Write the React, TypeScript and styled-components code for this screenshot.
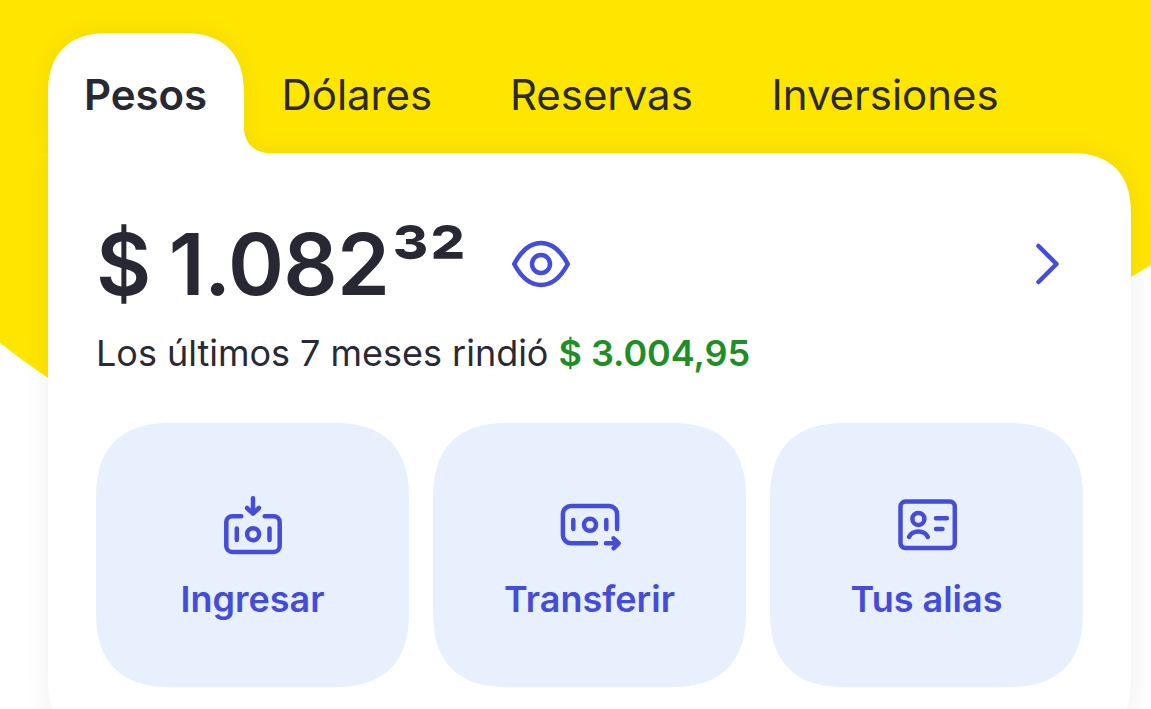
import styled, { createGlobalStyle } from 'styled-components';

const GlobalStyle = createGlobalStyle`
    body {
        margin: 0;
        background: #fff;
        overflow: hidden;
        font-family: Inter, "Liberation Sans", sans-serif;
    }
`;

const Page = styled.main`
    position: relative;
    height: 709px;
    overflow: hidden;
    box-sizing: border-box;
    padding: 33px 20px 0 48px;
`;

const Backdrop = styled.div`
    position: absolute;
    inset: 0;
    background: #ffe600;
    clip-path: path("M0 0H1151V265L1131 277Q600 640 48 378Q24 362 0 343Z");
`;

const Account = styled.section`
    position: relative;
`;

const Tabs = styled.nav`
    position: relative;
    z-index: 1;
    display: flex;
    height: 120px;
`;

const Tab = styled.button<{ $active?: boolean; $width: number }>`
    position: relative;
    flex: none;
    width: ${p => p.$width}px;
    height: 120px;
    padding: 0 0 0 ${p => p.$active ? 36 : 37.5}px;
    border: none;
    border-radius: 62px 62px 0 0;
    corner-shape: superellipse(1.3);
    background: ${p => p.$active ? '#fff' : 'none'};
    box-shadow: ${p => p.$active ? '0 0 26px rgba(40, 40, 90, 0.07)' : 'none'};
    clip-path: inset(-40px -40px 0 -40px);
    color: ${p => p.$active ? '#282834' : '#2b2a26'};
    font-family: inherit;
    font-size: 42px;
    font-weight: ${p => p.$active ? 600 : 400};
    line-height: 124px;
    letter-spacing: -0.05px;
    text-align: left;
    white-space: nowrap;

    &::after {
        content: "";
        display: ${p => p.$active ? 'block' : 'none'};
        position: absolute;
        left: 100%;
        bottom: 0;
        width: 24px;
        height: 24px;
        background: radial-gradient(circle at 100% 0, transparent 23.5px, #fff 24.2px);
    }
`;

const Card = styled.div`
    box-sizing: border-box;
    height: 588px;
    padding: 60px 48px 0;
    border-radius: 0 62px 62px 62px;
    corner-shape: superellipse(1.3);
    background: #fff;
    box-shadow: 0 0 26px rgba(40, 40, 90, 0.08);
`;

const BalanceRow = styled.div`
    display: flex;
    align-items: center;
    height: 102px;
    padding-right: 20px;
`;

const Balance = styled.div`
    width: 415px;
    padding-top: 1px;
    color: #282834;
    font-size: 85px;
    font-weight: 600;
    line-height: 104px;
    letter-spacing: -0.7px;
    word-spacing: -2.6px;
    white-space: nowrap;
`;

const Cents = styled.span`
    margin-left: 2px;
    font-size: 83px;
    line-height: 1;
`;

const IconButton = styled.button<{ $end?: boolean }>`
    display: flex;
    margin: 0 0 0 ${p => p.$end ? 'auto' : 0};
    padding: 0;
    border: none;
    background: none;
    color: #444cd8;
`;

const Earnings = styled.p`
    margin: 16px 0 0;
    height: 44px;
    color: #2a2a36;
    font-size: 36px;
    line-height: 44px;
    letter-spacing: -0.02px;
    white-space: nowrap;
`;

const Gain = styled.strong`
    color: #1e8e26;
    font-weight: 600;
    letter-spacing: -0.05px;
`;

const Actions = styled.div`
    display: grid;
    grid-template-columns: repeat(3, 1fr);
    gap: 24px;
    margin-top: 48px;
`;

const Action = styled.button`
    display: flex;
    flex-direction: column;
    align-items: center;
    height: 264px;
    padding: 68px 0 0;
    border: none;
    border-radius: 78px;
    corner-shape: superellipse(1.35);
    background: #e8f0fe;
    color: #444cd8;
    font-family: inherit;
    font-size: 36px;
    font-weight: 600;
    line-height: 44px;
    letter-spacing: 0;
`;

const Icon = styled.svg`
    display: block;
    flex: none;
    fill: none;
    stroke: currentColor;
    stroke-width: 4.5;
    stroke-linecap: round;
    stroke-linejoin: round;
`;

const ActionIcon = styled(Icon)`
    margin-bottom: 14px;
`;

const EyeIcon = () => (
    <Icon width="60" height="60" viewBox="0 0 60 60">
        <path d="M3.200 30C8 21 17 9 30 9s22 12 26.800 21C52 39 43 51 30 51S8 39 3.200 30Z" />
        <circle cx="30" cy="30" r="9" />
    </Icon>
);

const ChevronIcon = () => (
    <Icon width="30" height="48" viewBox="0 0 30 48">
        <path d="M5.500 6l18 18-18 18" />
    </Icon>
);

const DepositIcon = () => (
    <ActionIcon width="72" height="72" viewBox="0.2 -0.2 72 72">
        <path d="M24.500 25h-9a6 6 0 0 0-6 6v23.800a6 6 0 0 0 6 6h41.400a6 6 0 0 0 6-6V31a6 6 0 0 0-6-6h-9" />
        <path d="M36.200 7v15M30.200 16.800l6 5.700 6-5.700" />
        <path d="M20 37.200v11.600M52.700 37.200v11.600" />
        <circle cx="36.300" cy="43" r="6" />
    </ActionIcon>
);

const TransferIcon = () => (
    <ActionIcon width="72" height="72" viewBox="0.5 -0.1 72 72">
        <path d="M42.600 52.200H17.400a8 8 0 0 1-8-8V23a8 8 0 0 1 8-8h38.200a8 8 0 0 1 8 8v15" />
        <path d="M52.400 52.200h12M60 47.200l5.200 5-5.200 5" />
        <path d="M19.800 29v9M52.800 29v9" />
        <circle cx="36.500" cy="33.700" r="6" />
    </ActionIcon>
);

const AliasIcon = () => (
    <ActionIcon width="72" height="72" viewBox="0.4 -0.2 72 72">
        <rect x="9.900" y="10.400" width="54.300" height="46.400" rx="5" />
        <circle cx="27.800" cy="27.700" r="6" />
        <path d="M18.400 45.800c1.800-3.800 5-5.500 9.400-5.500s7.600 1.700 9.400 5.500" />
        <path d="M45.400 27.100h10.900M45.400 37.800h6.500" />
    </ActionIcon>
);

const tabs = [
    { label: 'Pesos', width: 196, active: true },
    { label: 'Dólares', width: 228.5 },
    { label: 'Reservas', width: 261.5 },
    { label: 'Inversiones', width: 300 },
];

const actions = [
    { label: 'Ingresar', icon: DepositIcon },
    { label: 'Transferir', icon: TransferIcon },
    { label: 'Tus alias', icon: AliasIcon },
];

export default function App() {
    return <Page>
        <GlobalStyle />
        <Backdrop />
        <Account>
            <Tabs>
                {tabs.map(tab => <Tab
                    key={tab.label}
                    $active={tab.active}
                    $width={tab.width}
                >
                    {tab.label}
                </Tab>)}
            </Tabs>
            <Card>
                <BalanceRow>
                    <Balance>$ 1.082<Cents>³²</Cents></Balance>
                    <IconButton aria-label="Ocultar saldo"><EyeIcon /></IconButton>
                    <IconButton aria-label="Ver detalle" $end><ChevronIcon /></IconButton>
                </BalanceRow>
                <Earnings>
                    Los últimos 7 meses rindió <Gain>$ 3.004,95</Gain>
                </Earnings>
                <Actions>
                    {actions.map(({ label, icon: ActionGlyph }) => <Action key={label}>
                        <ActionGlyph />
                        {label}
                    </Action>)}
                </Actions>
            </Card>
        </Account>
    </Page>
}
